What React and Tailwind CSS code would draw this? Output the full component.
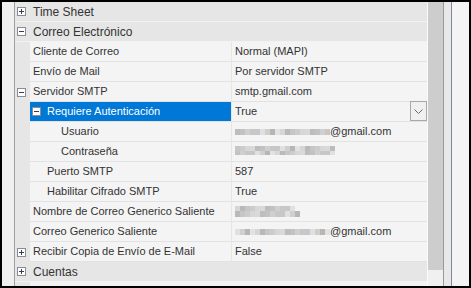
import React from "react";

const FONT = { fontFamily: '"Liberation Sans", Arial, sans-serif' };

function Box({ plus, className = "" }) {
  return (
    <svg width="9" height="9" viewBox="0 0 9 9" className={"block shrink-0 " + className}>
      <rect x="0.5" y="0.5" width="8" height="8" fill="#ffffff" stroke="#8c8c8c" />
      <line x1="2" y1="4.5" x2="7" y2="4.5" stroke="#2c3f6c" strokeWidth="1" />
      {plus && <line x1="4.5" y1="2" x2="4.5" y2="7" stroke="#2c3f6c" strokeWidth="1" />}
    </svg>
  );
}

const SHADES = [
  "bg-[#cfcfcf]", "bg-[#bdbdbd]", "bg-[#dad6d6]", "bg-[#c6c6c6]", "bg-[#d6d6d6]",
  "bg-[#b6b6b6]", "bg-[#e0e0e0]", "bg-[#cac6c6]", "bg-[#c2c2c2]", "bg-[#d9d9d9]",
  "bg-[#cccccc]", "bg-[#b9b9b9]", "bg-[#e2e2e2]", "bg-[#d1cece]", "bg-[#c4c8cc]",
];

function Mosaic({ blocks, offset = 0, h = "h-[6px]" }) {
  return (
    <div className="flex">
      {Array.from({ length: blocks }).map((_, i) => (
        <div key={i} className={"w-[5px] " + h + " " + SHADES[(i * 7 + offset) % SHADES.length]} />
      ))}
    </div>
  );
}

function Header({ label, plus }) {
  return (
    <div className="flex items-center h-[20px] bg-[#e6e6e6] border-b border-[#f2f2f2]">
      <div className="w-[15px] flex justify-end pr-[4px]">
        <Box plus={plus} />
      </div>
      <div className="pl-[3px] text-[12px] text-[#333]">{label}</div>
    </div>
  );
}

function Row({ label, value, indent = "pl-[3px]", gutter = null, selected = false, icon = null, dropdown = false }) {
  return (
    <div className="flex h-[20px]">
      <div className="w-[15px] bg-[#e6e6e6] flex items-center justify-end pr-[4px]">{gutter}</div>
      <div
        className={
          "w-[202px] flex items-center border-b border-r border-b-[#e2e2e2] border-r-[#e6e6e6] text-[11px] " +
          indent +
          (selected ? " bg-[#0078d7] text-white" : " bg-[#f4f4f4] text-[#333]")
        }
      >
        {icon}
        <span className="whitespace-nowrap">{label}</span>
      </div>
      <div className="flex-1 flex items-center border-b border-[#e2e2e2] bg-[#f4f4f4] pl-[3px] text-[11px] text-[#333] relative">
        {value}
        {dropdown && (
          <div className="absolute right-0 top-[-1px] w-[17px] h-[20px] border border-[#a8a8a8] bg-[#f0f0f0] flex items-center justify-center">
            <svg width="9" height="5" viewBox="0 0 9 5">
              <polyline points="0.5,0.5 4.5,4.5 8.5,0.5" fill="none" stroke="#6a6a6a" strokeWidth="1" />
            </svg>
          </div>
        )}
      </div>
    </div>
  );
}

export default function App() {
  return (
    <div style={FONT} className="w-[471px] h-[288px] border-2 border-black bg-[#f4f4f4] flex overflow-hidden">
      <div className="w-[13px] bg-[#f0f0f0] border-r border-[#a0a0a0]" />
      <div className="w-[412px] flex flex-col bg-[#f2f2f2]">
        <Header label="Time Sheet" plus />
        <Header label="Correo Electrónico" />
        <Row label="Cliente de Correo" value="Normal (MAPI)" />
        <Row label="Envío de Mail" value="Por servidor SMTP" />
        <Row label="Servidor SMTP" value="smtp.gmail.com" gutter={<Box />} />
        <Row
          label="Requiere Autenticación"
          value="True"
          selected
          indent="pl-[2px]"
          icon={<Box className="mr-[6px]" />}
          dropdown
        />
        <Row
          label="Usuario"
          indent="pl-[31px]"
          value={
            <div className="flex items-center">
              <Mosaic blocks={19} offset={1} />
              <span>@gmail.com</span>
            </div>
          }
        />
        <Row
          label="Contraseña"
          indent="pl-[31px]"
          value={
            <div className="flex flex-col mt-[-2px]">
              <Mosaic blocks={20} offset={3} h="h-[5px]" />
              <Mosaic blocks={20} offset={8} h="h-[4px]" />
            </div>
          }
        />
        <Row label="Puerto SMTP" indent="pl-[17px]" value="587" />
        <Row label="Habilitar Cifrado SMTP" indent="pl-[17px]" value="True" />
        <Row
          label="Nombre de Correo Generico Saliente"
          value={
            <div className="flex flex-col">
              <Mosaic blocks={12} offset={4} h="h-[5px]" />
              <Mosaic blocks={13} offset={11} h="h-[6px]" />
            </div>
          }
        />
        <Row
          label="Correo Generico Saliente"
          value={
            <div className="flex items-center">
              <Mosaic blocks={19} offset={6} />
              <span>@gmail.com</span>
            </div>
          }
        />
        <Row label="Recibir Copia de Envío de E-Mail" value="False" gutter={<Box plus />} />
        <Header label="Cuentas" plus />
        <div className="flex-1 flex">
          <div className="w-[15px] bg-[#e6e6e6]" />
          <div className="flex-1 bg-[#f2f2f2]" />
        </div>
      </div>
      <div className="w-[1px] bg-[#fafafa]" />
      <div className="w-[15px] flex flex-col bg-[#f0f0f0]">
        <div className="h-[268px] bg-[#cdcdcd]" />
      </div>
      <div className="w-[1px] bg-[#9a9a9a]" />
      <div className="w-[7px] bg-[#e8e8e8]" />
      <div className="w-[1px] bg-[#7d8a96]" />
      <div className="flex-1 bg-[#f4f4f4]" />
    </div>
  );
}
